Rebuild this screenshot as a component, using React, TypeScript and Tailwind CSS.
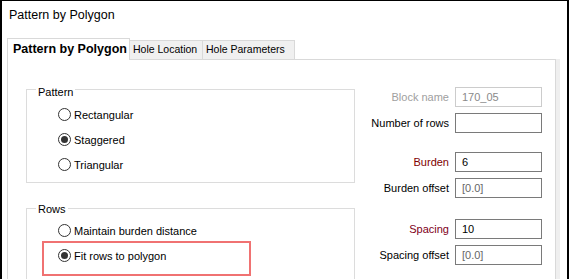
import React from 'react';

const font = { fontFamily: '"Liberation Sans", Arial, sans-serif' };

function Radio({ label, checked = false }: { label: string; checked?: boolean }) {
  return (
    <div className="flex h-[25px] items-center">
      <div className="flex h-[13px] w-[13px] items-center justify-center rounded-full border border-[#333333] bg-white">
        {checked && <div className="h-[7px] w-[7px] rounded-full bg-[#333333]" />}
      </div>
      <span className="ml-[3px] text-[11px] leading-[16px] text-black">{label}</span>
    </div>
  );
}

function Field({
  label,
  value = '',
  labelClass = 'text-black',
  valueClass = 'text-black',
  disabled = false,
  className = '',
}: {
  label: string;
  value?: string;
  labelClass?: string;
  valueClass?: string;
  disabled?: boolean;
  className?: string;
}) {
  return (
    <div className={`flex h-[20px] items-center justify-end gap-[6px] ${className}`}>
      <span className={`text-[11px] leading-[16px] ${labelClass}`}>{label}</span>
      <div
        className={`flex h-[20px] w-[87px] items-center border bg-white pl-[6px] text-[11px] ${
          disabled ? 'border-[#cccccc]' : 'border-[#7a7a7a]'
        } ${valueClass}`}
      >
        {value}
      </div>
    </div>
  );
}

export default function App() {
  const tabs = [
    { label: 'Hole Location', w: 'w-[74px]' },
    { label: 'Hole Parameters', w: 'w-[93px]' },
  ];

  return (
    <div
      style={font}
      className="h-[279px] w-[569px] overflow-hidden border-l-2 border-r-2 border-t border-black bg-white"
    >
      {/* title */}
      <div className="h-[37px] pl-[7px] pt-[6px] text-[12.5px] leading-[16px] text-black">
        Pattern by Polygon
      </div>

      {/* tabs */}
      <div className="flex h-[21px] items-end pl-[5px]">
        <div className="relative z-10 -mb-px flex h-[22px] w-[123px] items-center border border-b-0 border-[#d9d9d9] bg-white pl-[5px] text-[12.5px] font-bold text-black">
          Pattern by Polygon
        </div>
        {tabs.map((t) => (
          <div
            key={t.label}
            className={`-ml-px flex h-[19px] ${t.w} items-center border border-b-0 border-[#d9d9d9] bg-[#f0f0f0] pl-[3px] text-[10.5px] text-black`}
          >
            {t.label}
          </div>
        ))}
      </div>

      {/* panel */}
      <div className="flex pl-[5px]">
        <div className="flex h-[230px] w-[549px] border border-[#d9d9d9] bg-white">
          {/* left */}
          <div className="w-[347px] pl-[18px] pt-[29px]">
            <div className="relative h-[94px] w-[329px] border border-[#dcdcdc] pl-[31px] pt-[12px]">
              <span className="absolute left-[9px] top-[-6px] bg-white px-[2px] text-[11px] leading-[16px] text-black">
                Pattern
              </span>
              <Radio label="Rectangular" />
              <Radio label="Staggered" checked />
              <Radio label="Triangular" />
            </div>

            <div className="relative mt-[25px] h-[120px] w-[329px] border border-[#dcdcdc] pl-[31px] pt-[9px]">
              <span className="absolute left-[9px] top-[-8px] bg-white px-[2px] text-[11px] leading-[16px] text-black">
                Rows
              </span>
              <Radio label="Maintain burden distance" />
              <Radio label="Fit rows to polygon" checked />
              <div className="absolute left-[15px] top-[32px] h-[35px] w-[209px] border-2 border-[#f07272]" />
            </div>
          </div>

          {/* right */}
          <div className="flex-1 pr-[13px] pt-[27px]">
            <Field
              label="Block name"
              value="170_05"
              disabled
              labelClass="text-[#a0a0a0]"
              valueClass="text-[#8a8a8a]"
            />
            <Field label="Number of rows" className="mt-[6px]" />
            <Field label="Burden" value="6" labelClass="text-[#800000]" className="mt-[19px]" />
            <Field label="Burden offset" value="[0.0]" valueClass="text-[#666666]" className="mt-[6px]" />
            <Field label="Spacing" value="10" labelClass="text-[#800020]" className="mt-[21px]" />
            <Field label="Spacing offset" value="[0.0]" valueClass="text-[#666666]" className="mt-[6px]" />
          </div>
        </div>
        <div className="h-[230px] w-[4px] bg-[#efefef]" />
      </div>
    </div>
  );
}
